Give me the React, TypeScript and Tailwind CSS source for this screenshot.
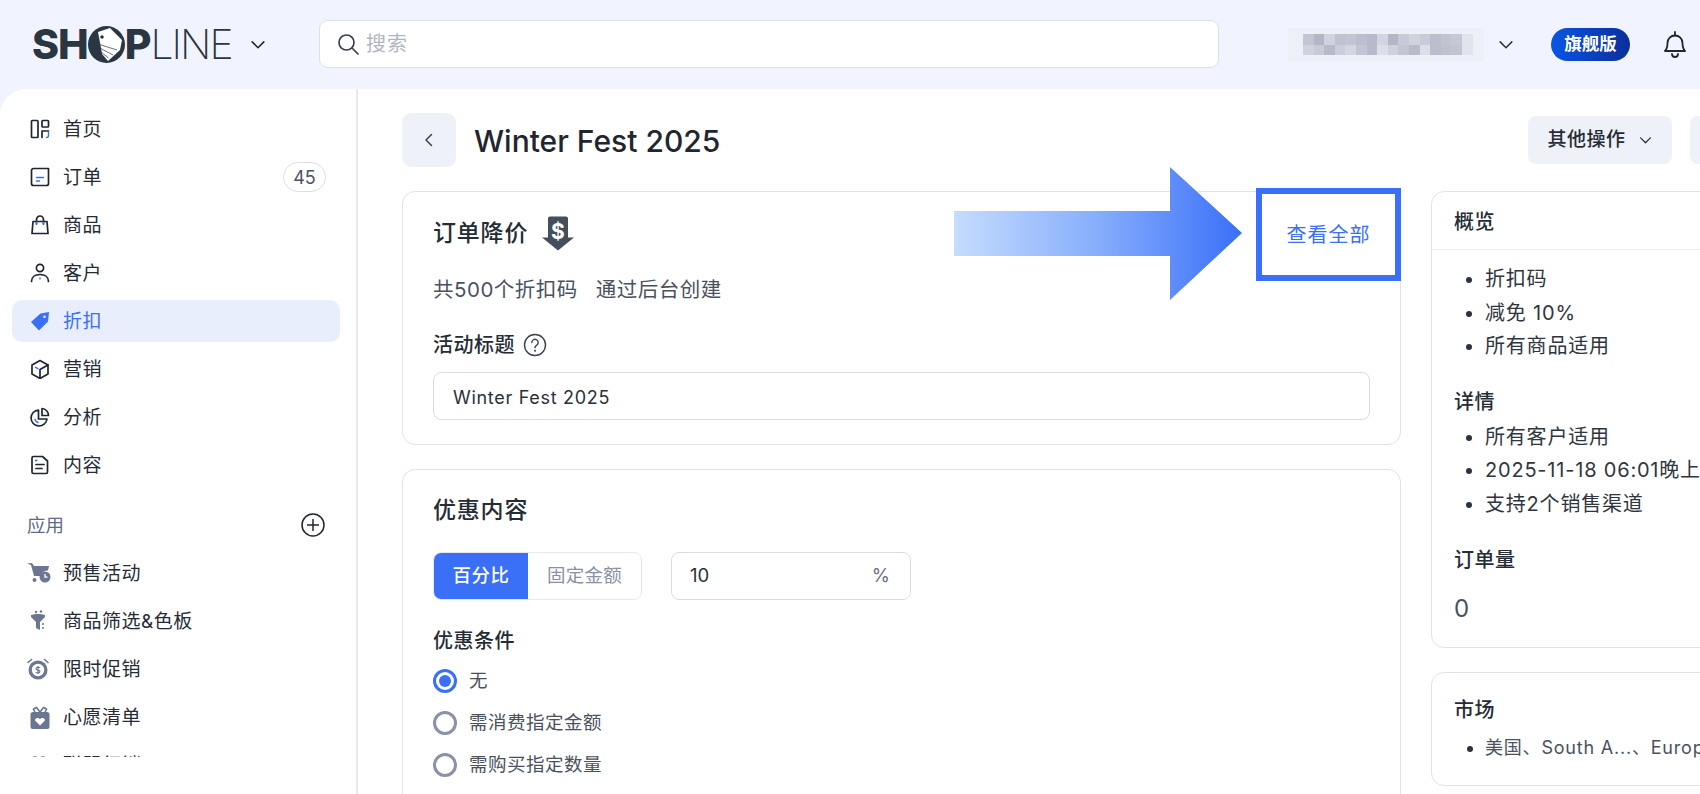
import React from "react";

const FONT = "font-['Inter','Noto_Sans_CJK_SC',sans-serif]";
const BLUE = "#3a6ff8";
const INK = "#1f2630";

function Svg({ children, size = 20, className = "" }: { children: React.ReactNode; size?: number; className?: string }) {
  return (
    <svg width={size} height={size} viewBox="0 0 20 20" fill="none" strokeLinecap="round" strokeLinejoin="round" className={className}>
      {children}
    </svg>
  );
}

const S = { stroke: INK, strokeWidth: 1.7 };
const A = { stroke: BLUE, strokeWidth: 1.4 };
const G = "#6b7690";

const icons: Record<string, React.ReactNode> = {
  home: (
    <Svg>
      <rect x="1.5" y="1.5" width="6.5" height="17" rx="0.8" {...S} />
      <rect x="12" y="1.5" width="6.5" height="6.5" rx="0.8" {...S} />
      <path d="M12 18.5V12h6.5" {...S} />
      <path d="M18.5 13.5v3a2 2 0 0 1-2 2" {...A} />
    </Svg>
  ),
  order: (
    <Svg>
      <path d="M3.5 1.5h15v15a2 2 0 0 1-2 2h-13a2 2 0 0 1-2-2v-13a2 2 0 0 1 2-2z" {...S} />
      <path d="M6.5 10.5h7M6.5 14h3" {...A} />
    </Svg>
  ),
  bag: (
    <Svg>
      <path d="M3 6.5h14l1 12H2z" {...S} />
      <path d="M6.5 9V4.5a3.5 3.5 0 0 1 7 0V9" {...S} />
      <path d="M6.5 7v2M13.5 7v2" {...A} />
    </Svg>
  ),
  user: (
    <Svg>
      <circle cx="10" cy="5" r="3.6" {...S} />
      <path d="M1.5 18.5c0-4.5 3.5-7 8.5-7s8.500 2.500 8.500 7" {...S} />
      <path d="M10 15v1" {...A} />
    </Svg>
  ),
  tag: (
    <Svg>
      <path d="M1 11 10.500 2.500 19 1l-1 9.500L9 19.500z" fill={BLUE} />
      <circle cx="14.500" cy="5.800" r="1.300" fill="#e9eefc" />
    </Svg>
  ),
  box: (
    <Svg>
      <path d="M10 1.500 18 6v9l-8 4.500L2 15V6z" {...S} />
      <path d="M10 10.500 18 6M10 10.500V19" {...S} />
      <path d="M5.500 8.300 8 9.700" {...A} />
    </Svg>
  ),
  pie: (
    <Svg>
      <path d="M8.500 3a8 8 0 1 0 8.500 9h-8.500z" {...S} />
      <path d="M12 1.500a7 7 0 0 1 6.500 7H12z" {...S} />
      <path d="M5 12.500c.5 1.500 1.500 2.500 3 3" {...A} />
    </Svg>
  ),
  doc: (
    <Svg>
      <path d="M3.500 1.500h9l5 4.500v11a1.500 1.500 0 0 1-1.500 1.500H3.500A1.500 1.500 0 0 1 2 17V3a1.500 1.500 0 0 1 1.500-1.500z" {...S} />
      <path d="M6 9.500h8M6 13.500h6" {...S} />
      <path d="M6 5.500h.5" stroke={BLUE} strokeWidth="2" />
    </Svg>
  ),
  cart: (
    <svg width="24" height="20" viewBox="0 0 24 20" fill="none" className="-ml-[3px]">
      <path d="M0 0.500 4 2l3 11h7l1-3a6 6 0 0 1 6-2.500L22 3 7 3 5 0z" fill={G} />
      <circle cx="7.500" cy="17" r="2" fill={G} />
      <circle cx="18" cy="14" r="5.500" fill={G} />
      <path d="M18 11v3.200h2.600" stroke="#fff" strokeWidth="1.300" />
    </svg>
  ),
  funnel: (
    <svg width="18" height="22" viewBox="0 0 18 22" fill="none">
      <circle cx="6" cy="2" r="1.200" fill={G} />
      <circle cx="11" cy="1.500" r="1.200" fill={G} />
      <path d="M1 5c4-1.500 10-1.500 14 0v2l-5 5v8l-4-2v-6L1 7z" fill={G} />
      <path d="M13 13v2M13 17v2" stroke={G} strokeWidth="1.500" />
    </svg>
  ),
  clock: (
    <svg width="22" height="22" viewBox="0 0 22 22" fill="none" className="-ml-[3px]">
      <circle cx="11" cy="12" r="9.500" fill={G} />
      <circle cx="11" cy="12" r="6.200" fill="#fff" />
      <path d="M1 4.500 4.500 1.500M21 4.500 17.500 1.500" stroke={G} strokeWidth="1.600" strokeLinecap="round" />
      <path d="M13 9.800c-.7-.8-4-1-4 .9s4 1 4 2.800-3.300 1.800-4.200.6M11 8v8" stroke={G} strokeWidth="1.100" />
    </svg>
  ),
  gift: (
    <svg width="20" height="23" viewBox="0 0 20 23" fill="none">
      <rect x="0.500" y="6" width="19" height="17" rx="2.500" fill={G} />
      <path d="M10 6 6.500 1.500 3.500 3 5 6M10 6l3.500-4.500L16.500 3 15 6" stroke={G} strokeWidth="1.600" strokeLinejoin="round" />
      <path d="M10 19.500 5.500 15c-2-2.500 2.800-4.500 4.500-1.800 1.700-2.700 6.500-.7 4.500 1.800z" fill="#fff" />
    </svg>
  ),
  link: (
    <svg width="18" height="20" viewBox="0 0 18 20" fill="none">
      <circle cx="5" cy="5" r="3" fill="none" stroke={G} strokeWidth="1.600" />
      <circle cx="13" cy="5" r="3" fill="none" stroke={G} strokeWidth="1.600" />
      <path d="M1 18c0-5 4-8 8-8s8 3 8 8z" fill={G} />
    </svg>
  ),
};

function Chevron({ size = 20, className = "", color = "#2a3340" }: { size?: number; className?: string; color?: string }) {
  return (
    <Svg size={size} className={`shrink-0 ${className}`}>
      <path d="M3.500 6.500 10 13l6.500-6.500" stroke={color} strokeWidth="1.700" />
    </Svg>
  );
}

function NavRow({ icon, label, badge, active }: { icon: string; label: string; badge?: string; active?: boolean }) {
  return (
    <div className={`h-[42px] rounded-[10px] flex items-center shrink-0 pl-[18px] pr-[14px] ${active ? "bg-[#e9eefc]" : ""}`}>
      <span className="w-[33px] flex items-center">{icons[icon]}</span>
      <span className={`pt-[2px] text-[19px] tracking-[0.5px] ${active ? "text-[#3a6ff8]" : "text-[#252c36]"}`}>{label}</span>
      {badge && (
        <span className="ml-auto h-[30px] w-[43px] rounded-full border border-[#dcdfe5] flex items-center justify-center text-[18px] text-[#4a5260]">
          {badge}
        </span>
      )}
    </div>
  );
}

function Logo() {
  return (
    <div className="flex items-center w-[200px] shrink-0 h-[31px] text-[#2a3642] text-[41px] leading-none">
      <span className="font-extrabold tracking-[-1px]">SH</span>
      <svg width="37" height="37" viewBox="0 0 37 37" className="shrink-0">
        <circle cx="18.500" cy="18.500" r="18.500" fill="#2a3642" />
        <path d="M10 6 22 2l12 12-2 10-12 11-6-7-1-6z" fill="#fff" />
        <circle cx="14" cy="11" r="1.800" fill="#2a3642" />
        <path d="M10 18l19 6M10 21l15 8M10.500 24l10 8" stroke="#2a3642" strokeWidth="0.700" />
      </svg>
      <span className="font-extrabold tracking-[-1px]">P</span>
      <span className="font-extralight tracking-[-2px]">LINE</span>
    </div>
  );
}

const PIX = [
  "#c3c5d4,#b4b6c6,#d0d3df,#c0c2d1,#c3c5d4,#bcbecd,#b8bac9,#d2d5e1,#b5b6c5,#c8cad7,#d0d2de,#c9cbd8,#bcbecd,#c2c4d2,#c6c8d6,#e2e4ed",
  "#d0d3df,#c8cad8,#b8bac9,#cbcdda,#d4d6e2,#c3c5d4,#b8bac9,#dcdfe9,#cfd1dd,#c3c5d3,#b9bbca,#dcdee8,#bcbecd,#bfc1cf,#c2c4d2,#e2e4ed",
];

function Bullets({ items, small }: { items: string[]; small?: boolean }) {
  return (
    <ul
      className={`list-disc pl-[31px] leading-[33.500px] marker:text-[#2a3340] ${
        small ? "text-[18px] tracking-[0.8px] text-[#4a5260]" : "text-[20px] tracking-[0.8px] text-[#2f3640]"
      }`}
    >
      {items.map((t) => (
        <li key={t} className="whitespace-nowrap">{t}</li>
      ))}
    </ul>
  );
}

function Radio({ label, on }: { label: string; on?: boolean }) {
  return (
    <div className="h-[42px] flex items-center gap-[12px]">
      <span className={`w-[24px] h-[24px] rounded-full border-[3px] flex items-center justify-center ${on ? "border-[#3a6ff8]" : "border-[#8a91a8]"}`}>
        {on && <span className="w-[12px] h-[12px] rounded-full bg-[#3a6ff8]" />}
      </span>
      <span className="text-[18.500px] tracking-[0.5px] text-[#4a5260]">{label}</span>
    </div>
  );
}

const H3 = "text-[20px] font-medium tracking-[0.500px] text-[#252c36] leading-[30px]";

export default function App() {
  return (
    <div className={`${FONT} w-[1700px] h-[794px] overflow-hidden bg-[#f1f4fe] flex flex-col`}>
      <header className="h-[89px] shrink-0 flex items-center pl-[32px]">
        <Logo />
        <Chevron size={18} className="ml-[17px]" color="#1f2630" />
        <div className="ml-[52px] w-[900px] shrink-0 h-[48px] mb-[1px] bg-white border border-[#dde0ea] rounded-[9px] flex items-center pl-[17px] gap-[7px]">
          <svg width="22" height="22" viewBox="0 0 22 22" fill="none">
            <circle cx="9.500" cy="9.500" r="7.500" stroke="#3a424e" strokeWidth="1.700" />
            <path d="m15 15 6 6" stroke="#3a424e" strokeWidth="1.700" strokeLinecap="round" />
          </svg>
          <span className="text-[20px] tracking-[1px] text-[#b0b5c2]">搜索</span>
        </div>
        <div className="ml-[69px] w-[196px] shrink-0 h-[34px] bg-[#eef0f8] flex flex-col justify-center pl-[15px]">
          {PIX.map((row, r) => (
            <div key={r} className="flex">
              {row.split(",").map((c, i) => (
                <span key={i} className="w-[10.600px] h-[10.600px]" style={{ background: c }} />
              ))}
            </div>
          ))}
        </div>
        <Chevron size={18} className="ml-[13px]" />
        <div className="ml-[36px] w-[79px] shrink-0 h-[33px] rounded-full bg-gradient-to-r from-[#0a55e6] to-[#0a2f9c] text-white text-[17.500px] font-semibold flex items-center justify-center">
          旗舰版
        </div>
        <svg width="24" height="28" viewBox="0 0 24 28" fill="none" className="ml-[33px] mb-[2px] shrink-0">
          <path d="M2 21c2-2 2.500-4 2.500-8a7.500 7.500 0 0 1 15 0c0 4 .5 6 2.500 8z" stroke="#1f2630" strokeWidth="1.800" strokeLinejoin="round" />
          <path d="M12 2v3.500M9 24a3 3 0 0 0 6 0" stroke="#1f2630" strokeWidth="1.800" strokeLinecap="round" />
        </svg>
      </header>

      <div className="flex-1 min-h-0 flex bg-white rounded-tl-[26px]">
        <aside className="w-[358px] shrink-0 border-r-2 border-[#e6e8ed] pl-[12px] pr-[16px] pt-[19px]">
          <div className="h-[649px] overflow-hidden flex flex-col gap-[6px]">
            <NavRow icon="home" label="首页" />
            <NavRow icon="order" label="订单" badge="45" />
            <NavRow icon="bag" label="商品" />
            <NavRow icon="user" label="客户" />
            <NavRow icon="tag" label="折扣" active />
            <NavRow icon="box" label="营销" />
            <NavRow icon="pie" label="分析" />
            <NavRow icon="doc" label="内容" />
            <div className="h-[42px] mt-[12px] shrink-0 flex items-center justify-between pl-[15px] pr-[15px]">
              <span className="pt-[2px] text-[18.500px] text-[#5f6b85]">应用</span>
              <svg width="24" height="24" viewBox="0 0 24 24" fill="none">
                <circle cx="12" cy="12" r="11" stroke="#1f2630" strokeWidth="1.500" />
                <path d="M12 6v12M6 12h12" stroke="#1f2630" strokeWidth="1.500" />
              </svg>
            </div>
            <NavRow icon="cart" label="预售活动" />
            <NavRow icon="funnel" label="商品筛选&色板" />
            <NavRow icon="clock" label="限时促销" />
            <NavRow icon="gift" label="心愿清单" />
            <NavRow icon="link" label="联盟行销" />
          </div>
        </aside>

        <main className="flex-1 min-w-0 pl-[44px] pt-[24px]">
          <div className="h-[54px] flex items-center w-[1400px]">
            <div className="w-[54px] h-[54px] rounded-[9px] bg-[#eef1f7] flex items-center justify-center">
              <svg width="12" height="16" viewBox="0 0 12 16" fill="none">
                <path d="M8.500 2.500 3 8l5.500 5.500" stroke="#3a424e" strokeWidth="1.500" strokeLinecap="round" strokeLinejoin="round" />
              </svg>
            </div>
            <h1 className="ml-[18px] pt-[2px] text-[30px] font-medium text-[#1f2630]">Winter Fest 2025</h1>
            <div className="ml-auto w-[144px] h-[48px] rounded-[8px] bg-[#eef1f7] flex items-center justify-center gap-[12px] text-[19px] tracking-[0.5px] font-medium text-[#252c36] shrink-0">
              其他操作
              <Chevron size={15} />
            </div>
            <div className="ml-[18px] w-[112px] h-[48px] rounded-[8px] bg-[#eef1f7] shrink-0" />
          </div>

          <div className="flex gap-[30px] mt-[24px] w-[1400px]">
            <div className="w-[999px] shrink-0 flex flex-col gap-[24px]">
              <section className="relative h-[254px] border border-[#e0e3e8] rounded-[13px] px-[30px] pt-[24px]">
                <div className="flex items-center gap-[13px] h-[34px]">
                  <h2 className="text-[23px] font-medium tracking-[0.800px] text-[#252c36]">订单降价</h2>
                  <svg width="34" height="35" viewBox="0 0 34 34" fill="none">
                    <path d="M7 2a2 2 0 0 1 2-2h16a2 2 0 0 1 2 2v19h6L17 34 1 21h6z" fill="#454e5c" />
                    <text x="17" y="22" textAnchor="middle" fontSize="21" fontWeight="700" fill="#fff" fontFamily="Inter, sans-serif">$</text>
                  </svg>
                </div>
                <p className="mt-[25px] text-[20.500px] tracking-[0.5px] text-[#4a5260] leading-[30px] flex gap-[18px]">
                  <span>共500个折扣码</span>
                  <span>通过后台创建</span>
                </p>
                <div className="mt-[25px] flex items-center gap-[8px] h-[30px]">
                  <span className="text-[20px] font-medium tracking-[0.5px] text-[#252c36]">活动标题</span>
                  <svg width="24" height="24" viewBox="0 0 24 24" fill="none">
                    <circle cx="12" cy="12" r="10.500" stroke="#3a424e" strokeWidth="1.400" />
                    <path d="M8.800 9.500a3.200 3.200 0 1 1 4.800 2.800c-1 .6-1.600 1.200-1.600 2.400" stroke="#3a424e" strokeWidth="1.400" strokeLinecap="round" />
                    <circle cx="12" cy="17.800" r="1" fill="#3a424e" />
                  </svg>
                </div>
                <div className="mt-[12px] h-[48px] w-[937px] border border-[#d9dce3] rounded-[8px] flex items-center pl-[19px] pt-[2px] text-[18px] tracking-[0.7px] text-[#2a3038]">
                  Winter Fest 2025
                </div>

                <svg width="292" height="136" viewBox="0 0 292 136" className="absolute left-[550px] top-[-26px] blur-[0.5px]">
                  <defs>
                    <linearGradient id="arrowFill" x1="0" y1="0" x2="1" y2="0">
                      <stop offset="0" stopColor="#c6dcfd" />
                      <stop offset="0.5" stopColor="#86aefc" />
                      <stop offset="1" stopColor="#3a6ff8" />
                    </linearGradient>
                  </defs>
                  <path d="M1 45h216V1l72 66-72 67V90H1z" fill="url(#arrowFill)" />
                </svg>
                <div className="absolute left-[853px] top-[-4px] w-[145px] h-[93px] bg-white border-[6px] border-[#3a6ff8] flex items-center justify-center text-[20px] tracking-[1px] text-[#3a6ff8]">
                  查看全部
                </div>
              </section>

              <section className="border border-[#e0e3e8] rounded-[13px] h-[400px] px-[30px] pt-[23px]">
                <h2 className="text-[23px] font-medium tracking-[0.800px] text-[#252c36] leading-[34px]">优惠内容</h2>
                <div className="mt-[25px] flex">
                  <div className="flex h-[48px] w-[209px] border border-[#e6e8ed] rounded-[8px] overflow-hidden text-[18.500px]">
                    <span className="w-[94px] bg-[#3a6ff8] text-white font-medium flex items-center justify-center tracking-[0.500px]">百分比</span>
                    <span className="flex-1 text-[#8a91a4] flex items-center justify-center tracking-[0.300px]">固定金额</span>
                  </div>
                  <div className="ml-[29px] w-[240px] h-[48px] border border-[#d9dce3] rounded-[8px] flex items-center justify-between pl-[18px] pr-[20px] text-[18.500px]">
                    <span className="text-[#2a3038]">10</span>
                    <span className="text-[#6b7285]">%</span>
                  </div>
                </div>
                <h3 className={`mt-[26px] ${H3}`}>优惠条件</h3>
                <div className="mt-[4px]">
                  <Radio label="无" on />
                  <Radio label="需消费指定金额" />
                  <Radio label="需购买指定数量" />
                </div>
              </section>
            </div>

            <div className="w-[371px] shrink-0 flex flex-col gap-[24px]">
              <section className="h-[457px] border border-[#e0e3e8] rounded-[13px]">
                <div className={`h-[58px] border-b border-[#eceef1] flex items-center pl-[22px] pt-[3px] ${H3}`}>概览</div>
                <div className="pl-[22px] pt-[13px]">
                  <Bullets items={["折扣码", "减免 10%", "所有商品适用"]} />
                  <h3 className={`mt-[23px] ${H3}`}>详情</h3>
                  <div className="mt-[4px]">
                    <Bullets items={["所有客户适用", "2025-11-18 06:01晚上", "支持2个销售渠道"]} />
                  </div>
                  <h3 className={`mt-[24px] ${H3}`}>订单量</h3>
                  <p className="mt-[19px] text-[24px] text-[#4a5260] leading-[30px]">0</p>
                </div>
              </section>
              <section className="h-[114px] border border-[#e0e3e8] rounded-[13px] pl-[22px] pt-[22px]">
                <h3 className={H3}>市场</h3>
                <div className="mt-[6px]">
                  <Bullets small items={["美国、South A...、Europe"]} />
                </div>
              </section>
            </div>
          </div>
        </main>
      </div>
    </div>
  );
}
